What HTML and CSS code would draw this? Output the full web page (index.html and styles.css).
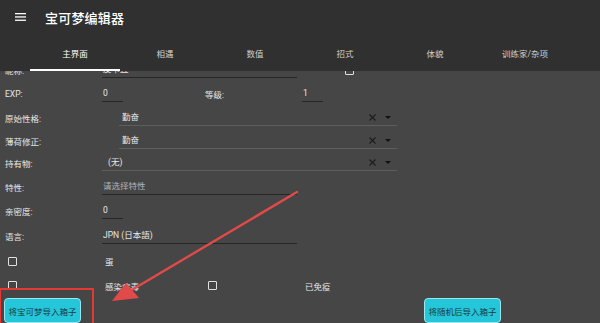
FILE: index.html
```html
<!DOCTYPE html>
<html lang="zh">
<head>
  <meta charset="UTF-8" />
  <meta name="viewport" content="width=device-width, initial-scale=1.0" />
  <title>宝可梦编辑器</title>
  <link rel="stylesheet" href="styles.css">
</head>
<body>
<header class="appbar">
  <div class="toolbar">
    <svg class="menu-icon" width="11" height="8" viewBox="0 0 11 8">
      <rect x="0" y="0" width="11" height="1.3" fill="#fff"/>
      <rect x="0" y="3.3" width="11" height="1.3" fill="#fff"/>
      <rect x="0" y="6.6" width="11" height="1.3" fill="#fff"/>
    </svg>
    <span class="title">宝可梦编辑器</span>
  </div>
  <nav class="tabs">
    <div class="tab active">主界面</div>
    <div class="tab">相遇</div>
    <div class="tab">数值</div>
    <div class="tab">招式</div>
    <div class="tab">体貌</div>
    <div class="tab">训练家/杂项</div>
  </nav>
</header>

<main class="content">
  <div class="form">
    <div class="row h24">
      <div class="label">昵称:</div>
      <div class="field dark w195">皮卡丘</div>
      <span class="checkbox nick-check"></span>
    </div>
    <div class="row h24">
      <div class="cell">
        <div class="label">EXP:</div>
        <div class="field dark w20">0</div>
      </div>
      <div class="cell">
        <div class="label">等级:</div>
        <div class="field dark w20">1</div>
      </div>
    </div>
    <div class="row h24">
      <div class="label wide-label">原始性格:</div>
      <div class="field light select nature">勤奋
        <svg class="clear" width="7" height="7" viewBox="0 0 7 7"><path d="M0.5 0.5L6.5 6.5M6.5 0.5L0.5 6.5" stroke="#1c1c1c" stroke-width="1.1"/></svg>
        <span class="arrow"></span>
      </div>
    </div>
    <div class="row h22">
      <div class="label wide-label">薄荷修正:</div>
      <div class="field light select nature">勤奋
        <svg class="clear" width="7" height="7" viewBox="0 0 7 7"><path d="M0.5 0.5L6.5 6.5M6.5 0.5L0.5 6.5" stroke="#1c1c1c" stroke-width="1.1"/></svg>
        <span class="arrow"></span>
      </div>
    </div>
    <div class="row h22">
      <div class="label">持有物:</div>
      <div class="field light select item">(无)
        <svg class="clear" width="7" height="7" viewBox="0 0 7 7"><path d="M0.5 0.5L6.5 6.5M6.5 0.5L0.5 6.5" stroke="#1c1c1c" stroke-width="1.1"/></svg>
        <span class="arrow"></span>
      </div>
    </div>
    <div class="row h25">
      <div class="label">特性:</div>
      <div class="field dark w195 placeholder">请选择特性</div>
    </div>
    <div class="row h24">
      <div class="label">亲密度:</div>
      <div class="field dark w20">0</div>
    </div>
    <div class="row h25">
      <div class="label">语言:</div>
      <div class="field dark w195">JPN (日本語)</div>
    </div>
    <div class="row h26 checks">
      <div class="check-cell"><span class="checkbox"></span></div>
      <div class="check-text">蛋</div>
    </div>
    <div class="row h23 checks">
      <div class="check-cell"><span class="checkbox"></span></div>
      <div class="check-text">感染病毒</div>
      <div class="check-cell"><span class="checkbox"></span></div>
      <div class="check-text">已免疫</div>
    </div>
  </div>
  <div class="actions">
    <button class="btn">将宝可梦导入箱子</button>
    <button class="btn btn-right">将随机后导入箱子</button>
  </div>
</main>

<div class="highlight-box"></div>
<svg class="pointer" width="600" height="323" viewBox="0 0 600 323">
  <line x1="297" y1="192" x2="130" y2="291" stroke="#e24a4a" stroke-width="2.4" stroke-linecap="round"/>
  <polygon points="112,301 126,283 139,298" fill="#e24a4a"/>
</svg>
</body>
</html>
```

FILE: styles.css
```css
body {
  margin: 0;
  width: 600px;
  height: 323px;
  overflow: hidden;
  background: #464646;
  font-family: Roboto, "Noto Sans CJK SC", sans-serif;
  color: #e6e6e6;
  position: relative;
}
.appbar {
  background: #303030;
  height: 71px;
  position: relative;
  z-index: 2;
}
.toolbar {
  height: 34px;
  display: flex;
  align-items: center;
  padding-left: 15px;
}
.menu-icon {
  display: block;
}
.title {
  margin-left: 19px;
  font-size: 13px;
  font-weight: 500;
  color: #ffffff;
  letter-spacing: 0.2px;
}
.tabs {
  display: flex;
  padding-left: 30px;
  height: 37px;
}
.tab {
  width: 90px;
  box-sizing: border-box;
  display: flex;
  align-items: center;
  justify-content: center;
  font-size: 8.5px;
  color: #cfcfcf;
  padding-top: 1px;
}
.tab.active {
  color: #ffffff;
  border-bottom: 2px solid #ffffff;
  padding-top: 3px;
}
.content {
  height: 252px;
  overflow: hidden;
  position: relative;
  z-index: 1;
}
.form {
  margin-top: -13px;
}
.row {
  display: flex;
  align-items: center;
  padding-left: 5px;
  font-size: 8.5px;
  position: relative;
}
.h22 { height: 22px; }
.h23 { height: 23px; }
.h24 { height: 24px; }
.h25 { height: 25px; }
.h26 { height: 26px; }
.cell {
  display: flex;
  align-items: center;
  width: 200px;
}
.label {
  width: 97px;
  flex-shrink: 0;
}
.wide-label {
  width: 114px;
}
.field {
  height: 15px;
  line-height: 15px;
  box-sizing: content-box;
  white-space: nowrap;
  overflow: hidden;
  position: relative;
}
.field.dark {
  border-bottom: 1px solid #262626;
}
.field.light {
  border-bottom: 1px solid #5e5e5e;
}
.w20 {
  width: 20px;
  padding-left: 1px;
}
.w195 {
  width: 194px;
  padding-left: 1px;
}
.placeholder {
  color: #b3b3b3;
}
.select.nature {
  width: 275px;
  padding-left: 3px;
}
.select.item {
  width: 289px;
  padding-left: 6px;
}
.clear {
  position: absolute;
  left: 250px;
  top: 4px;
}
.select.item .clear {
  left: 267px;
}
.arrow {
  position: absolute;
  left: 266px;
  top: 6px;
  width: 0;
  height: 0;
  border-left: 3.5px solid transparent;
  border-right: 3.5px solid transparent;
  border-top: 3.5px solid #111;
}
.select.item .arrow {
  left: 283px;
}
.checkbox {
  display: inline-block;
  width: 7px;
  height: 7px;
  border: 1.5px solid #e0e0e0;
  border-radius: 1px;
}
.nick-check {
  margin-left: 48px;
}
.checks {
  padding-left: 0;
}
.check-cell {
  width: 100px;
  padding-left: 8px;
  box-sizing: border-box;
  display: flex;
  align-items: center;
}
.check-text {
  width: 100px;
  padding-left: 5px;
  box-sizing: border-box;
}
.actions {
  display: flex;
  padding-left: 4px;
  margin-top: 1px;
}
.btn {
  width: 77px;
  height: 25px;
  background: #26c6da;
  border: 1px solid #9ae6ef;
  border-radius: 4px;
  color: #183a40;
  font-family: Roboto, "Noto Sans CJK SC", sans-serif;
  font-size: 8.5px;
  padding: 0;
}
.btn-right {
  margin-left: 343px;
}
.highlight-box {
  position: absolute;
  left: -1px;
  top: 288px;
  width: 91px;
  height: 40px;
  border: 2px solid #e53935;
  z-index: 3;
}
.pointer {
  position: absolute;
  left: 0;
  top: 0;
  z-index: 4;
}
```
